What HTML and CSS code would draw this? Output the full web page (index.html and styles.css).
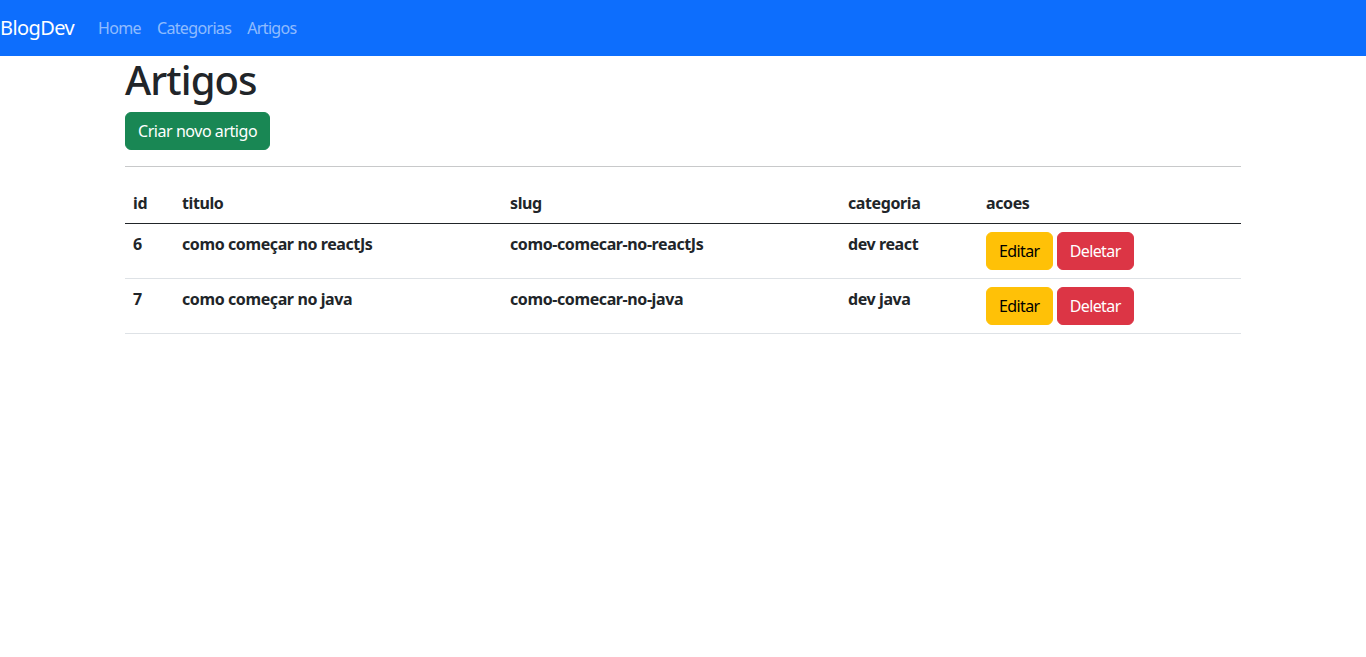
FILE: index.html
```html
<!DOCTYPE html>
<html lang="pt-BR">
<head>
<meta charset="utf-8">
<title>BlogDev</title>
<link rel="stylesheet" href="styles.css">
</head>
<body>
<nav class="navbar">
  <a class="brand" href="#">BlogDev</a>
  <ul class="nav">
    <li><a class="nav-link" href="#">Home</a></li>
    <li><a class="nav-link" href="#">Categorias</a></li>
    <li><a class="nav-link" href="#">Artigos</a></li>
  </ul>
</nav>
<main class="container">
  <h1 class="title">Artigos</h1>
  <a class="btn btn-success" href="#">Criar novo artigo</a>
  <hr class="divider">
  <table class="table">
    <thead>
      <tr>
        <th class="c-id">id</th>
        <th class="c-titulo">titulo</th>
        <th class="c-slug">slug</th>
        <th class="c-cat">categoria</th>
        <th class="c-acoes">acoes</th>
      </tr>
    </thead>
    <tbody>
      <tr>
        <td>6</td>
        <td>como começar no reactJs</td>
        <td>como-comecar-no-reactJs</td>
        <td>dev react</td>
        <td><div class="actions"><a class="btn btn-warning" href="#">Editar</a><button class="btn btn-danger">Deletar</button></div></td>
      </tr>
      <tr>
        <td>7</td>
        <td>como começar no java</td>
        <td>como-comecar-no-java</td>
        <td>dev java</td>
        <td><div class="actions"><a class="btn btn-warning" href="#">Editar</a><button class="btn btn-danger">Deletar</button></div></td>
      </tr>
    </tbody>
  </table>
</main>
</body>
</html>
```
FILE: styles.css
```css
* { box-sizing: border-box; }
body {
  margin: 0;
  font-family: "Noto Sans", "Open Sans", sans-serif;
  font-size: 16px;
  line-height: 24px;
  color: #212529;
  background: #fff;
}
.navbar {
  display: flex;
  align-items: center;
  height: 56px;
  padding: 8px 0;
  background: #0d6efd;
}
.brand {
  color: #fff;
  text-decoration: none;
  font-size: 20px;
  line-height: 30px;
  margin-right: 16px;
  letter-spacing: -0.6px;
}
.nav {
  display: flex;
  list-style: none;
  margin: 0;
  padding: 0;
}
.nav-link {
  display: block;
  padding: 8px;
  color: rgba(255,255,255,0.55);
  text-decoration: none;
  letter-spacing: -0.65px;
}
.container {
  width: 1140px;
  margin: 0 auto;
  padding: 0 12px;
}
.title {
  margin: 0 0 8px;
  font-size: 40px;
  line-height: 48px;
  font-weight: 500;
  letter-spacing: -0.9px;
}
.btn {
  display: inline-block;
  border: 1px solid transparent;
  border-radius: 6px;
  padding: 6px 12px;
  font: inherit;
  font-weight: 400;
  line-height: 24px;
  text-decoration: none;
  cursor: pointer;
  letter-spacing: -0.6px;
}
.btn-success { background: #198754; border-color: #198754; color: #fff; letter-spacing: -0.45px; }
.btn-warning { background: #ffc107; border-color: #ffc107; color: #000; }
.btn-danger { background: #dc3545; border-color: #dc3545; color: #fff; }
.divider {
  margin: 16px 0;
  border: 0;
  border-top: 1px solid #c8c9ca;
}
.table {
  width: 100%;
  border-collapse: collapse;
  table-layout: fixed;
  margin-bottom: 16px;
}
.table th, .table td {
  padding: 8px;
  text-align: left;
  vertical-align: top;
  font-weight: 700;
  letter-spacing: -0.4px;
}
.table thead th { border-bottom: 1px solid #212529; }
.table tbody td { border-bottom: 1px solid #dee2e6; }
.c-id { width: 49px; }
.c-titulo { width: 328px; }
.c-slug { width: 338px; }
.c-cat { width: 138px; }
.actions { display: flex; gap: 4px; }
```
